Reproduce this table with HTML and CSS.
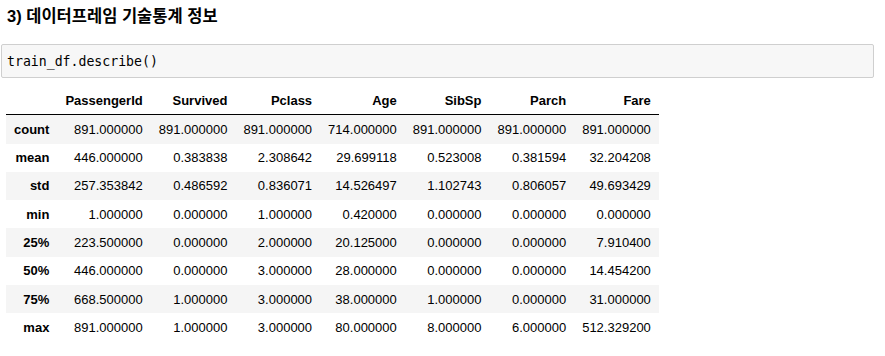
FILE: index.html
```html
<!DOCTYPE html>
<html lang="ko">
<head>
  <meta charset="UTF-8">
  <title>train_df.describe()</title>
  <link rel="stylesheet" href="styles.css">
</head>
<body>
  <div class="notebook">
    <h4 class="title">3) 데이터프레임 기술통계 정보</h4>
    <div class="input-box">
      <pre class="code">train_df.describe()</pre>
    </div>
    <div class="output">
      <table class="dataframe">
        <thead>
          <tr>
            <th></th>
            <th>PassengerId</th>
            <th>Survived</th>
            <th>Pclass</th>
            <th>Age</th>
            <th>SibSp</th>
            <th>Parch</th>
            <th>Fare</th>
          </tr>
        </thead>
        <tbody>
          <tr><th>count</th><td>891.000000</td><td>891.000000</td><td>891.000000</td><td>714.000000</td><td>891.000000</td><td>891.000000</td><td>891.000000</td></tr>
          <tr><th>mean</th><td>446.000000</td><td>0.383838</td><td>2.308642</td><td>29.699118</td><td>0.523008</td><td>0.381594</td><td>32.204208</td></tr>
          <tr><th>std</th><td>257.353842</td><td>0.486592</td><td>0.836071</td><td>14.526497</td><td>1.102743</td><td>0.806057</td><td>49.693429</td></tr>
          <tr><th>min</th><td>1.000000</td><td>0.000000</td><td>1.000000</td><td>0.420000</td><td>0.000000</td><td>0.000000</td><td>0.000000</td></tr>
          <tr><th>25%</th><td>223.500000</td><td>0.000000</td><td>2.000000</td><td>20.125000</td><td>0.000000</td><td>0.000000</td><td>7.910400</td></tr>
          <tr><th>50%</th><td>446.000000</td><td>0.000000</td><td>3.000000</td><td>28.000000</td><td>0.000000</td><td>0.000000</td><td>14.454200</td></tr>
          <tr><th>75%</th><td>668.500000</td><td>1.000000</td><td>3.000000</td><td>38.000000</td><td>1.000000</td><td>0.000000</td><td>31.000000</td></tr>
          <tr><th>max</th><td>891.000000</td><td>1.000000</td><td>3.000000</td><td>80.000000</td><td>8.000000</td><td>6.000000</td><td>512.329200</td></tr>
        </tbody>
      </table>
    </div>
  </div>
</body>
</html>
```

FILE: styles.css
```css
body {
  margin: 0;
  background: #fff;
  color: #000;
  font-family: 'Liberation Sans', Arial, 'Noto Sans CJK KR', sans-serif;
}
.notebook {
  padding: 0 11px 0 1px;
}
.title {
  margin: 6px 0 0 6px;
  font-size: 16.5px;
  line-height: 20px;
  font-weight: 700;
  font-family: 'Liberation Sans', Arial, 'Noto Sans CJK KR', sans-serif;
}
.input-box {
  margin-top: 18px;
  background: #f7f7f7;
  border: 1px solid #cfcfcf;
  border-radius: 2px;
  padding: 8px 6px 6px 5px;
}
.code {
  margin: 0;
  font-family: 'DejaVu Sans Mono', 'Liberation Mono', monospace;
  font-size: 13.2px;
  line-height: 18px;
  color: #000;
}
.output {
  margin: 8px 0 0 5px;
}
.dataframe {
  border-collapse: collapse;
  border-spacing: 0;
  font-size: 13px;
  color: #000;
}
.dataframe th,
.dataframe td {
  padding: 6.5px 8px;
  line-height: 15.3px;
  text-align: right;
  white-space: nowrap;
  border: none;
}
.dataframe th {
  font-weight: 700;
}
.dataframe thead tr {
  border-bottom: 1px solid #000;
}
.dataframe tbody tr:nth-child(odd) {
  background: #f5f5f5;
}
```
